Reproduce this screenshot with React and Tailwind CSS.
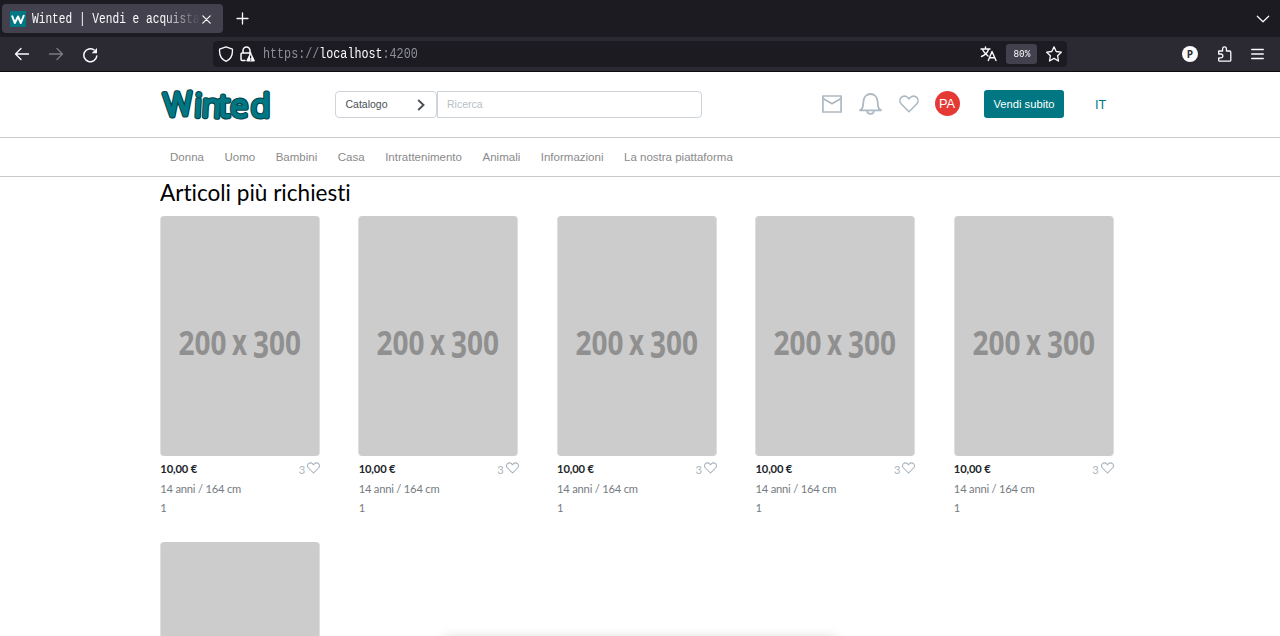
import React from "react";

const sans = "font-['Liberation_Sans',sans-serif]";
const stroke = { fill: "none", stroke: "currentColor", strokeLinecap: "round", strokeLinejoin: "round" };

function BrowserChrome() {
  return (
    <div className="h-[72px] border-b border-[#0c0c0d] bg-[#2b2a33] font-['Liberation_Mono',monospace] text-[#fbfbfe]">
      <div className="flex h-[37px] items-center bg-[#1c1b22]">
        <div className="ml-[2px] flex h-[29px] w-[221px] items-center rounded-[4px] bg-[#42414d] pl-2">
          <svg className="h-4 w-4 shrink-0" viewBox="0 0 16 16">
            <rect width="16" height="16" fill="#007782" />
            <path d="M2 4.500 4.800 12 8 5.500 10.800 12 14 4" fill="none" stroke="#fff" strokeWidth="2" strokeLinejoin="round" />
          </svg>
          <div className="ml-[6px] h-[18px] w-[168px] overflow-hidden [mask-image:linear-gradient(to_right,#000_78%,transparent)]">
            <span className="block w-[212px] origin-left scale-x-[.798] text-[14px] leading-[18px] whitespace-nowrap">Winted | Vendi e acquista</span>
          </div>
          <svg className="mt-[1px] ml-[2px] h-[9px] w-[9px]" viewBox="0 0 9 9" {...stroke} strokeWidth="1.200"><path d="M.8.8l7.400 7.400M8.200.8L.8 8.200" /></svg>
        </div>
        <svg className="ml-[13px] h-[13px] w-[13px]" viewBox="0 0 13 13" {...stroke} strokeWidth="1.300"><path d="M6.500 1v11M1 6.500h11" /></svg>
        <svg className="mr-[10px] ml-auto h-2 w-[14px]" viewBox="0 0 14 8" {...stroke} strokeWidth="1.200"><path d="M1.300 1.200 7 6.800l5.700-5.600" /></svg>
      </div>
      <div className="flex h-[34px] items-center">
        <svg className="ml-[14px] h-4 w-4" viewBox="0 0 16 16" {...stroke} strokeWidth="1.300"><path d="M14.500 8h-13M7 2.500 1.500 8 7 13.500" /></svg>
        <svg className="ml-[18px] h-4 w-4 text-[#7c7b83]" viewBox="0 0 16 16" {...stroke} strokeWidth="1.300"><path d="M1.500 8h13M9 2.500 14.500 8 9 13.500" /></svg>
        <svg className="mt-[1px] ml-[18px] h-4 w-4" viewBox="0 0 16 16" {...stroke} strokeWidth="1.500"><path d="M14.800 9A6.500 6.500 0 1 1 12 2.800" /><path d="M15 1v5.300H9.700z" fill="currentColor" stroke="none" /></svg>
        <div className="ml-[115px] flex h-[26px] w-[854px] items-center rounded-[4px] bg-[#1c1b22] pl-[5px]">
          <svg className="h-4 w-4" viewBox="0 0 16 16" {...stroke} strokeWidth="1.300"><path d="M8 .8 1.600 3.200C1.200 8 2.500 13 8 15.300 13.500 13 14.800 8 14.400 3.200z" /></svg>
          <svg className="ml-[5px] h-4 w-4" viewBox="0 0 16 16">
            <path d="M6 14.500H3.200A1.200 1.200 0 0 1 2 13.300V8.200A1.200 1.200 0 0 1 3.200 7h8.600M4 7V4.500a3.500 3.500 0 0 1 7 0V8" {...stroke} strokeWidth="1.500" />
            <path d="M10.900 7.500a1 1 0 0 1 1.500 0l3.300 6.700a.9.9 0 0 1-.8 1.300H8.300a.9.9 0 0 1-.8-1.300z" fill="currentColor" />
            <path d="M11.600 9.500v3M11.600 13.400v1" stroke="#1c1b22" strokeWidth="1.200" />
          </svg>
          <span className="ml-2 w-[154px] whitespace-nowrap"><span className="inline-block origin-left scale-x-[.837] text-[14px] leading-[18px] text-[#8f8f98]">https://<span className="text-[#fbfbfe]">localhost</span>:4200</span></span>
          <svg className="ml-auto h-4 w-[17px]" viewBox="0 0 17 16" {...stroke} strokeWidth="1.400"><path d="M1 3h9M5.500 1v2M2.500 3.500C4 7 6 8.500 8 10M8.500 3.500C7.500 7 5 9 1.500 10.500M8.300 14.500 12 5.500l4 9M9.700 11.700h5" /></svg>
          <div className="ml-[9px] flex h-5 w-[31px] items-center justify-center rounded-[3px] bg-[#42414d]"><span className="inline-block scale-x-[.85] pt-[1px] text-[11px] leading-none">80%</span></div>
          <svg className="mr-[5px] ml-[9px] h-4 w-4" viewBox="0 0 16 16" {...stroke} strokeWidth="1.300"><path d="M8 .9 10.200 5.500 15.300 6.200 11.600 9.700 12.500 15 8 12.400 3.500 15 4.400 9.700.7 6.200 5.800 5.500z" /></svg>
        </div>
        <div className="ml-[115px] flex h-4 w-4 items-center justify-center rounded-full bg-[#fbfbfe] font-['Open_Sans',sans-serif] text-[10px] leading-none font-bold text-[#2b2a33]">P</div>
        <svg className="ml-[19px] h-4 w-4" viewBox="0 0 16 16" {...stroke} strokeWidth="1.300"><path d="M1.700 8V5h3.900V2.800a1.900 1.900 0 0 1 3.800 0V5h3.200a1.200 1.200 0 0 1 1.200 1.200v8a1 1 0 0 1-1 1H2.700a1 1 0 0 1-1-1v-2.300h2.200a1.900 1.900 0 0 0 0-3.900z" /></svg>
        <svg className="ml-[18px] h-4 w-[13px]" viewBox="0 0 13 16" {...stroke} strokeWidth="1.300"><path d="M.7 3.500h11.600M.7 8h11.600M.7 12.500h11.600" /></svg>
      </div>
    </div>
  );
}

const logoX = [5.5, 35, 42.5, 60, 71.5, 92];
const logoTilt = [-4, 3, 3, 0, 0, 0];

function Logo() {
  const word = <>{"Winted".split("").map((c, i) => <tspan key={i} x={logoX[i]} rotate={logoTilt[i]}>{c}</tspan>)}</>;
  return (
    <svg className="h-9 w-[114px] font-['Open_Sans',sans-serif] text-[32px] font-light" viewBox="0 0 114 36" strokeLinejoin="round" overflow="visible">
      <text y="30.500" fill="#005059" stroke="#004149" strokeWidth="5">{word}</text>
      <text y="30.500" fill="#007782" stroke="#007782" strokeWidth="2.900">{word}</text>
    </svg>
  );
}

function Heart({ className, width }) {
  return <svg className={className} viewBox="0 0 20 18" {...stroke} strokeLinejoin="miter" strokeWidth={width}><path d="M10 16.700 2.300 9C.5 7 .5 4.200 2.300 2.400 4.100.6 7 .7 8.700 2.500L10 3.900l1.300-1.400C13 .7 15.900.6 17.700 2.400c1.800 1.800 1.800 4.600 0 6.600z" /></svg>;
}

function Header() {
  return (
    <header className={`flex h-[66px] items-center border-b border-[#cacaca] ${sans}`}>
      <div className="ml-[159px] w-[176px] pb-[2px]"><Logo /></div>
      <div className="flex h-[27px] w-[102px] items-center justify-between rounded-[4px] border border-[#ced4da] pr-[11px] pl-[9.500px] text-[10.500px] text-[#495057]">
        Catalogo
        <svg className="h-3 w-2" viewBox="0 0 8 12" {...stroke} strokeLinecap="butt" strokeLinejoin="miter" strokeWidth="1.900"><path d="M1.200 1 6.500 6 1.200 11" /></svg>
      </div>
      <input placeholder="Ricerca" className="h-[27px] w-[265px] rounded-r-[4px] border border-[#ced4da] px-[9px] pb-[1px] text-[10.500px] outline-none placeholder:text-[#b9bec4]" />
      <div className="mb-[2px] ml-[120px] flex items-center text-[#adb9c2]">
        <svg className="h-[18px] w-5" viewBox="0 0 20 18" {...stroke} strokeWidth="1.700"><path d="M.9 1h18.200v16H.9zM1 3.500 10 8.700 19 3.500" /></svg>
        <svg className="ml-[17px] h-[22px] w-[23px]" viewBox="0 0 23 22" {...stroke} strokeWidth="1.800"><path d="M1 17.300h21c-1.800-1-2.700-2-2.900-4L18.500 8c-.4-4-3-7-7-7s-6.600 3-7 7l-.6 5.300c-.2 2-1.100 3-2.900 4zM8 17.500c.3 4.500 6.700 4.500 7 0" /></svg>
        <Heart className="ml-[17px] h-[18px] w-5" width="1.600" />
        <div className="ml-[15.500px] flex h-[25px] w-[25px] items-center justify-center rounded-full bg-[#e53935] text-[12.800px] text-white">PA</div>
      </div>
      <button className="mb-[2px] ml-[24.500px] h-7 w-20 rounded-[3px] bg-[#007782] pt-[1px] text-[11.200px] text-white">Vendi subito</button>
      <span className="ml-[31px] text-[12.800px] text-[#007782]">IT</span>
    </header>
  );
}

const links = ["Donna", "Uomo", "Bambini", "Casa", "Intrattenimento", "Animali", "Informazioni", "La nostra piattaforma"];

function Item() {
  return (
    <article className="h-[326px] w-[160px] text-[11.200px] text-[#757b82]">
      <div className="h-60 overflow-hidden rounded-[4px] border-x border-[#dedede] bg-[#ccc]">
        <svg className="h-full w-full font-['Open_Sans',sans-serif] font-bold" viewBox="0 0 158 240" fill="#909090">
          <text x="17.500" y="138.500" fontSize="34" textLength="48" lengthAdjust="spacingAndGlyphs">200</text>
          <text x="71" y="138.500" fontSize="35" textLength="15" lengthAdjust="spacingAndGlyphs">x</text>
          <text x="92" y="141.500" fontSize="37.500" textLength="16" lengthAdjust="spacingAndGlyphs">3</text>
          <text x="108" y="138.500" fontSize="34" textLength="32" lengthAdjust="spacingAndGlyphs">00</text>
        </svg>
      </div>
      <div className="flex h-[23px] items-center pt-[3px] pl-[.3px]">
        <b className="font-bold tracking-[-.15px] text-[#212529]">10,00 €</b>
        <span className="mr-[2px] ml-auto pt-[2px] text-[#adb5bd]">3</span>
        <Heart className="-mr-[.3px] mb-[2px] h-3 w-[13px] text-[#a8b3bd]" width="1.600" />
      </div>
      <p className="h-[19px] pl-[.3px] leading-[19px] tracking-[-.22px]">14 anni / 164 cm</p>
      <p className="h-[19px] pl-[.3px] leading-[19px]">1</p>
    </article>
  );
}

export default function App() {
  return (
    <div className="relative h-[636px] w-[1280px] overflow-hidden bg-white font-['Lato',sans-serif]">
      <BrowserChrome />
      <Header />
      <nav className={`flex h-[39px] items-center gap-[20.500px] border-b border-[#cacaca] pt-[2px] pl-[170px] text-[11.520px] text-[#8a8a8a] ${sans}`}>
        {links.map((l) => <a key={l}>{l}</a>)}
      </nav>
      <main className="pl-[160px]">
        <h1 className="h-[39px] pt-[1px] text-[22.550px] leading-[30px] text-black [font-variant-ligatures:none]">Articoli più richiesti</h1>
        <div className="grid grid-cols-[repeat(5,198.400px)]">
          {Array.from({ length: 6 }, (_, i) => <Item key={i} />)}
        </div>
      </main>
      <div className="absolute top-[638px] left-[444px] h-5 w-[392px] shadow-[0_0_12px_rgba(0,0,0,0.18)]" />
    </div>
  );
}
